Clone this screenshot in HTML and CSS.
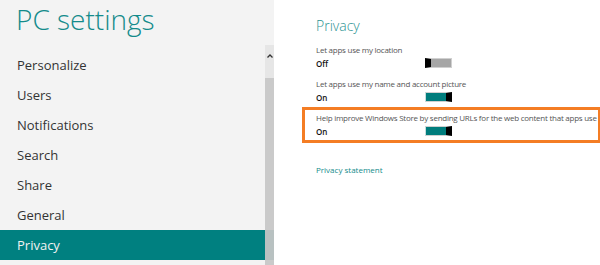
FILE: index.html
```html
<!DOCTYPE html>
<html lang="en">
<head>
    <meta charset="UTF-8">
    <title>PC settings</title>
    <link rel="stylesheet" href="styles.css">
</head>
<body>
    <div class="settings">
        <div class="side">
            <div class="side-title">PC settings</div>
            <ul class="side-menu">
                <li>Personalize</li>
                <li>Users</li>
                <li>Notifications</li>
                <li>Search</li>
                <li>Share</li>
                <li>General</li>
                <li class="active">Privacy</li>
            </ul>
            <div class="scrollbar">
                <div class="scroll-up">
                    <svg width="6" height="4" viewBox="0 0 6 4"><path d="M0.5 3.5 L3 1 L5.5 3.5" fill="none" stroke="#333" stroke-width="1.3"/></svg>
                </div>
                <div class="scroll-thumb"></div>
            </div>
        </div>
        <div class="main">
            <div class="main-title">Privacy</div>
            <div class="option">
                <div class="option-label">Let apps use my location</div>
                <div class="option-row">
                    <span class="option-value">Off</span>
                    <span class="toggle"></span>
                </div>
            </div>
            <div class="option">
                <div class="option-label">Let apps use my name and account picture</div>
                <div class="option-row">
                    <span class="option-value">On</span>
                    <span class="toggle on"></span>
                </div>
            </div>
            <div class="option marked">
                <div class="option-label">Help improve Windows Store by sending URLs for the web content that apps use</div>
                <div class="option-row">
                    <span class="option-value">On</span>
                    <span class="toggle on"></span>
                </div>
            </div>
            <div class="statement">Privacy statement</div>
        </div>
    </div>
</body>
</html>
```

FILE: styles.css
```css
body {
    margin: 0;
    padding: 0;
    font-family: "Open Sans", "Noto Sans", sans-serif;
    background-color: #fff;
}
.settings {
    display: flex;
    height: 265px;
    overflow: hidden;
}
.side {
    position: relative;
    width: 274px;
    flex-shrink: 0;
    background-color: #f3f3f3;
}
.side-title {
    height: 50px;
    padding-left: 16px;
    font-size: 28px;
    font-weight: 300;
    line-height: 38px;
    color: #138b8b;
}
.side-menu {
    list-style: none;
    margin: 0;
    padding: 0;
}
.side-menu li {
    height: 30px;
    padding-left: 17px;
    font-size: 13px;
    line-height: 30px;
    color: #333;
}
.side-menu li.active {
    background-color: #008080;
    color: #f2f2f2;
}
.scrollbar {
    position: absolute;
    top: 45px;
    right: 0;
    bottom: 0;
    width: 9px;
    display: flex;
    flex-direction: column;
}
.scroll-up {
    height: 33px;
    background-color: #e6e6e6;
    display: flex;
    justify-content: center;
    padding-top: 9px;
    box-sizing: border-box;
}
.scroll-thumb {
    flex: 1;
    background-color: rgba(198, 198, 198, 0.93);
}
.main {
    flex: 1;
    padding-left: 28px;
}
.main-title {
    height: 20px;
    margin-top: 16px;
    padding-left: 14px;
    font-size: 14px;
    font-weight: 300;
    line-height: 20px;
    color: #2b9393;
}
.option {
    width: 282px;
    margin-top: 3px;
    margin-bottom: -5px;
    padding: 2px 0 2px 11px;
    border: 3px solid transparent;
}
.option.marked {
    border-color: #f47d24;
}
.option-label {
    font-size: 8px;
    line-height: 12px;
    letter-spacing: -0.25px;
    color: #555;
    white-space: nowrap;
}
.option-row {
    display: flex;
    align-items: center;
    height: 14px;
}
.option-value {
    width: 109px;
    font-size: 8px;
    font-weight: 600;
    color: #111;
}
.toggle {
    width: 20px;
    height: 8px;
    background-color: #a6a6a6;
    border: 1px solid #d0d0d0;
    border-left: 6px solid #000;
}
.toggle.on {
    background-color: #007d7d;
    border-left: 1px solid #c6dede;
    border-right: 6px solid #000;
}
.statement {
    margin-top: 26px;
    padding-left: 14px;
    font-size: 8px;
    line-height: 12px;
    color: #138b8b;
}
```
